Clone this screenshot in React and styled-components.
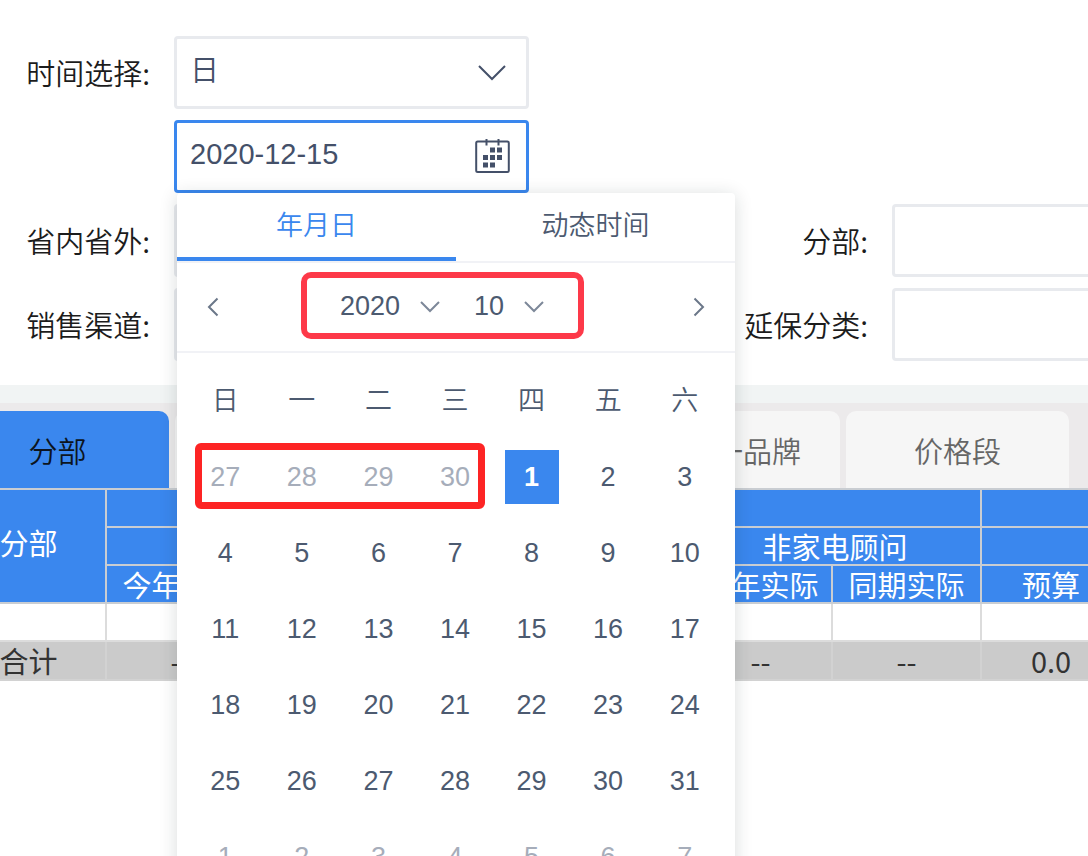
import React, { useState } from 'react';
import styled, { createGlobalStyle } from 'styled-components';

const weekdays = ['日', '一', '二', '三', '四', '五', '六'];

// October 2020 starts on a Thursday
const days = [
    ...[27, 28, 29, 30].map((day) => ({ day, other: true })),
    ...Array.from({ length: 31 }, (_, i) => ({ day: i + 1, other: false })),
    ...[1, 2, 3, 4, 5, 6, 7].map((day) => ({ day, other: true })),
];

const columns = [155, 149, 143, 149, 142, 143, 149, 140, 149];

function Chevron({ width, height, stroke }) {
    return (
        <svg width={width} height={height} viewBox={`0 0 ${width} ${height}`} fill="none" stroke="currentColor" strokeWidth={stroke}>
            <path d={`M1 1 L${width / 2} ${height - 2} L${width - 1} 1`} />
        </svg>
    );
}

function SideArrow({ flip }) {
    return (
        <svg width="12" height="20" viewBox="0 0 12 20" fill="none" stroke="currentColor" strokeWidth="2">
            <path d={flip ? 'M1.5 1.5 L10 10 L1.5 18.5' : 'M10.5 1.5 L2 10 L10.5 18.5'} />
        </svg>
    );
}

function CalendarIcon() {
    return (
        <svg width="35" height="36" viewBox="0 0 35 36" fill="none" stroke="currentColor" strokeWidth="2">
            <rect x="1.2" y="2.5" width="32.6" height="30.5" rx="1.5" />
            <path d="M11.5 0 V6.5 M23.5 0 V6.5" />
            <g fill="currentColor" stroke="none">
                <rect x="15" y="8.5" width="5" height="5" />
                <rect x="22" y="8.5" width="5" height="5" />
                <rect x="8" y="16" width="5" height="5" />
                <rect x="15" y="16" width="5" height="5" />
                <rect x="22" y="16" width="5" height="5" />
                <rect x="8" y="23.5" width="5" height="5" />
                <rect x="15" y="23.5" width="5" height="5" />
            </g>
        </svg>
    );
}

function DatePanel() {
    const [selected, setSelected] = useState(4);

    return (
        <PanelStyled>
            <PanelTabs>
                <PanelTab type="button" $active>年月日</PanelTab>
                <PanelTab type="button">动态时间</PanelTab>
            </PanelTabs>
            <MonthBar>
                <ArrowButton type="button" aria-label="上个月"><SideArrow /></ArrowButton>
                <MonthSelects>
                    <MiniSelect>
                        <select aria-label="年" defaultValue="2020">
                            <option>2019</option>
                            <option>2020</option>
                        </select>
                        <Chevron width={20} height={12} stroke={2} />
                    </MiniSelect>
                    <MiniSelect $short>
                        <select aria-label="月" defaultValue="10">
                            <option>10</option>
                            <option>11</option>
                            <option>12</option>
                        </select>
                        <Chevron width={20} height={12} stroke={2} />
                    </MiniSelect>
                </MonthSelects>
                <ArrowButton type="button" aria-label="下个月"><SideArrow flip /></ArrowButton>
                <MonthMark />
            </MonthBar>
            <DayGrid>
                {weekdays.map((name) => <Weekday key={name}>{name}</Weekday>)}
                {days.map(({ day, other }, i) => (
                    <Day key={i} type="button" $other={other} $selected={i === selected} onClick={() => setSelected(i)}>
                        <span>{day}</span>
                    </Day>
                ))}
                <DaysMark />
            </DayGrid>
        </PanelStyled>
    );
}

function Filters() {
    return (
        <FiltersStyled>
            <FormItem $full>
                <Label htmlFor="period">时间选择:</Label>
                <Field>
                    <select id="period" defaultValue="日">
                        <option>日</option>
                        <option>月</option>
                        <option>年</option>
                    </select>
                    <Chevron width={28} height={16} stroke={2} />
                </Field>
            </FormItem>
            <FormItem $full>
                <Label htmlFor="date" />
                <Field $focus>
                    <input id="date" aria-label="日期" defaultValue="2020-12-15" />
                    <CalendarIcon />
                    <DatePanel />
                </Field>
            </FormItem>
            <FormItem>
                <Label htmlFor="province">省内省外:</Label>
                <Field><input id="province" /></Field>
            </FormItem>
            <FormItem>
                <Label htmlFor="branch">分部:</Label>
                <Field><input id="branch" /></Field>
            </FormItem>
            <FormItem>
                <Label htmlFor="channel">销售渠道:</Label>
                <Field><input id="channel" /></Field>
            </FormItem>
            <FormItem>
                <Label htmlFor="warranty">延保分类:</Label>
                <Field><input id="warranty" /></Field>
            </FormItem>
        </FiltersStyled>
    );
}

function Report() {
    return (
        <ReportTable>
            <colgroup>
                {columns.map((width, i) => <col key={i} style={{ width }} />)}
            </colgroup>
            <thead>
                <tr>
                    <th rowSpan={3}>分部</th>
                    <th colSpan={6}></th>
                    <th colSpan={2}></th>
                </tr>
                <tr>
                    <th colSpan={2}></th>
                    <th colSpan={2}></th>
                    <th colSpan={2}>非家电顾问</th>
                    <th colSpan={2}></th>
                </tr>
                <tr>
                    <th>今年实际</th>
                    <th></th>
                    <th></th>
                    <th></th>
                    <th>今年实际</th>
                    <th>同期实际</th>
                    <th>预算</th>
                    <th></th>
                </tr>
            </thead>
            <tbody>
                <tr>
                    {columns.map((_, i) => <td key={i}></td>)}
                </tr>
            </tbody>
            <tfoot>
                <tr>
                    <td>合计</td>
                    <td>--</td>
                    <td></td>
                    <td></td>
                    <td></td>
                    <td>--</td>
                    <td>--</td>
                    <td>0.0</td>
                    <td></td>
                </tr>
            </tfoot>
        </ReportTable>
    );
}

function App() {
    return (
        <Page>
            <GlobalStyle />
            <Filters />
            <Divider />
            <TabBar>
                <Tab type="button" $active>分部</Tab>
                <Tab type="button" aria-label="品类" $narrow />
                <Tab type="button" aria-label="品牌" $narrow />
                <Tab type="button">品类一品牌</Tab>
                <Tab type="button">价格段</Tab>
            </TabBar>
            <Report />
        </Page>
    );
}

const GlobalStyle = createGlobalStyle`
    * {
        box-sizing: border-box;
    }

    body {
        margin: 0;
        background: #fff;
        font-family: "Noto Sans CJK SC", sans-serif;
    }

    button, input, select {
        margin: 0;
        padding: 0;
        border: 0;
        outline: 0;
        background: none;
        color: inherit;
        font: inherit;
        appearance: none;
    }
`;

const Page = styled.div`
    height: 100vh;
    overflow: hidden;
    font-size: 29px;
    font-weight: 350;
`;

const FiltersStyled = styled.form`
    display: grid;
    grid-template-columns: repeat(2, 66%);
    gap: 11px 0;
    padding: 36px 0 24px;
`;

const FormItem = styled.div`
    display: flex;
    align-items: center;
    gap: 24px;
    grid-column: ${(p) => (p.$full ? '1 / -1' : 'auto')};
`;

const Label = styled.label`
    width: 150px;
    padding-bottom: 2px;
    color: #1c1c1c;
    text-align: right;
    white-space: nowrap;
`;

const Field = styled.div`
    position: relative;
    display: flex;
    align-items: center;
    width: 355px;
    height: 73px;
    padding: 0 16px 0 13px;
    border: 3px solid ${(p) => (p.$focus ? '#3a87ee' : '#e8eaee')};
    border-radius: 4px;
    background: #fff;
    color: #445069;

    input, select {
        flex: 1;
        min-width: 0;
        height: 64px;
        padding-bottom: 4px;
        font-family: "Liberation Sans", "Noto Sans CJK SC", sans-serif;
    }

    select + svg {
        margin-right: 4px;
    }
`;

const PanelStyled = styled.div`
    position: absolute;
    z-index: 2;
    top: 70px;
    left: 0;
    width: 558px;
    border-radius: 4px;
    background: #fff;
    box-shadow: 0 2px 18px rgba(20, 40, 40, 0.16);
    color: #4c5a70;
    font-family: "Liberation Sans", "Noto Sans CJK SC", sans-serif;
    font-size: 27px;
`;

const PanelTabs = styled.div`
    display: flex;
    height: 70px;
    border-bottom: 2px solid #f1f2f6;
`;

const PanelTab = styled.button`
    flex: 1;
    padding-bottom: ${(p) => (p.$active ? '4px' : '8px')};
    border-bottom: ${(p) => (p.$active ? '4px solid #3a87ee' : '0')};
    color: ${(p) => (p.$active ? '#3a87ee' : 'inherit')};
`;

const MonthBar = styled.div`
    position: relative;
    display: flex;
    align-items: center;
    justify-content: space-between;
    height: 90px;
    padding: 0 30px;
    border-bottom: 2px solid #f1f2f6;
`;

const ArrowButton = styled.button`
    display: flex;
    color: #6b7789;
`;

const MonthSelects = styled.div`
    display: flex;
    gap: 30px;
    padding-right: 24px;
`;

const MiniSelect = styled.div`
    display: flex;
    align-items: center;
    gap: 20px;

    select {
        flex: none;
        width: ${(p) => (p.$short ? '30px' : '60px')};
        height: 40px;
        padding: 0 0 2px;
    }

    svg {
        color: #7d8899;
    }
`;

const MonthMark = styled.div`
    position: absolute;
    top: 9px;
    left: 124px;
    width: 283px;
    height: 67px;
    border: 6px solid #fd3949;
    border-radius: 10px;
    pointer-events: none;
`;

const DayGrid = styled.div`
    position: relative;
    display: grid;
    grid-template-columns: repeat(7, 1fr);
    grid-auto-rows: 76px;
    padding: 10px 12px 10px 10px;
`;

const Weekday = styled.div`
    display: flex;
    align-items: center;
    justify-content: center;
    padding-bottom: 6px;
`;

const Day = styled.button`
    display: flex;
    align-items: center;
    justify-content: center;
    color: ${(p) => (p.$other ? '#a6adba' : 'inherit')};

    span {
        width: 54px;
        background: ${(p) => (p.$selected ? '#3a87ee' : 'none')};
        color: ${(p) => (p.$selected ? '#fff' : 'inherit')};
        font-weight: ${(p) => (p.$selected ? 'bold' : 'inherit')};
        line-height: 54px;
    }
`;

const DaysMark = styled.div`
    position: absolute;
    top: 90px;
    left: 18px;
    width: 290px;
    height: 66px;
    border: 7px solid #fd2424;
    border-radius: 6px;
    pointer-events: none;
`;

const Divider = styled.div`
    height: 18px;
    background: #f1f4f4;
`;

const TabBar = styled.div`
    display: flex;
    gap: 6px;
    padding-top: 8px;
    background: #eceaeb;

    > :first-child {
        margin-left: -54px;
    }
`;

const Tab = styled.button`
    flex: none;
    width: ${(p) => (p.$narrow ? '215px' : '223px')};
    height: 77px;
    border-radius: 10px 10px 0 0;
    background: ${(p) => (p.$active ? '#3a87ee' : '#f6f6f6')};
    color: ${(p) => (p.$active ? '#0c1420' : '#666')};
`;

const ReportTable = styled.table`
    width: 1319px;
    margin-left: -50px;
    border-collapse: collapse;
    table-layout: fixed;
    line-height: 30px;
    text-align: center;
    white-space: nowrap;

    th, td {
        height: 38px;
        padding: 0;
        border: 2px solid #dcdcdc;
    }

    th {
        border-color: #c9cdd2;
        background: #3a87ee;
        color: #fff;
        font-weight: 400;
    }

    th[rowspan] {
        padding-bottom: 8px;
    }

    tfoot td {
        height: 39px;
        padding-bottom: 2px;
        border-color: #d2d2d2;
        background: #cbcbcb;
        color: #333;
        font-weight: 400;
    }
`;

export default App;
